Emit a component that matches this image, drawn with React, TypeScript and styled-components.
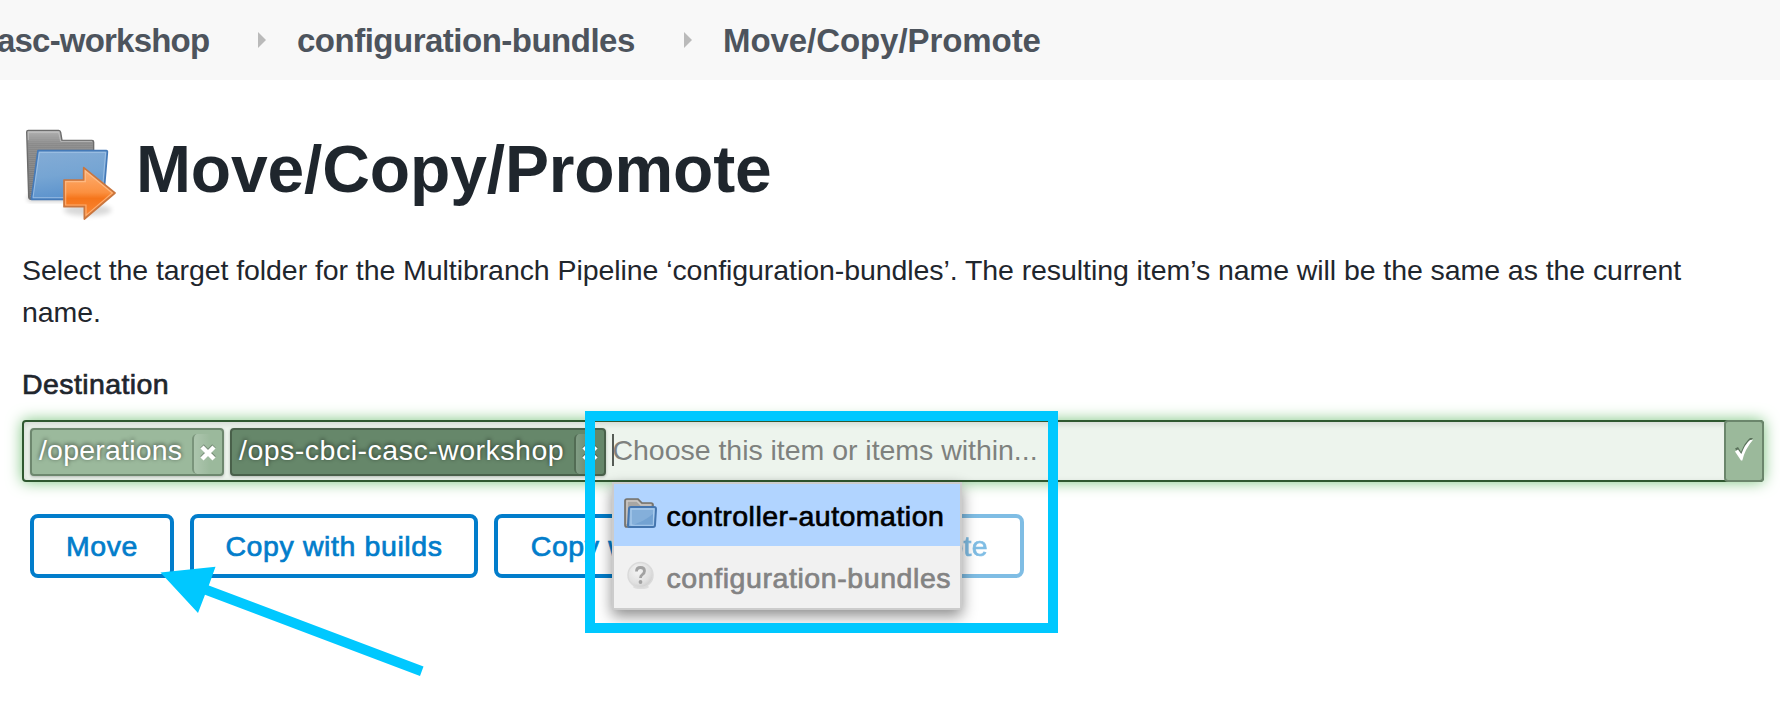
import React from 'react';
import styled, { createGlobalStyle } from 'styled-components';

const GlobalStyle = createGlobalStyle`
  *, *::before, *::after { box-sizing: border-box; }
  body {
    margin: 0;
    background: #fff;
    color: #1f262d;
    font-family: "Liberation Sans", "Helvetica Neue", Arial, sans-serif;
    font-size: 28.5px;
  }
`;

const Page = styled.div`
  position: relative;
  width: 100%;
  height: 702px;
  overflow: hidden;
`;

const Breadcrumbs = styled.nav`
  display: flex;
  height: 80px;
  padding-top: 1px;
  background: #f8f8f8;
  line-height: 80px;
`;

const Crumb = styled.a<{ $tracking: number; $width: number }>`
  flex: none;
  width: ${(p) => p.$width}px;
  white-space: nowrap;
  color: #4d545d;
  font-size: 33px;
  font-weight: 700;
  letter-spacing: ${(p) => p.$tracking}px;
  &:first-child { margin-left: -3px; }
`;

const Chevron = styled.svg`
  flex: none;
  width: 8px;
  height: 16px;
  margin: 31px 31px 0 0;
  fill: #bababa;
`;

const Content = styled.main`
  padding: 40px 16px 0 22px;
`;

const TitleRow = styled.header`
  display: flex;
  gap: 20px;
  height: 110px;
`;

const Title = styled.h1`
  margin: 0;
  font-size: 66px;
  line-height: 98px;
  letter-spacing: -0.15px;
`;

const Description = styled.p`
  max-width: 1720px;
  margin: 19px 0 0;
  line-height: 42px;
  letter-spacing: -0.07px;
`;

const Label = styled.div`
  margin-top: 30px;
  line-height: 42px;
  letter-spacing: 0.4px;
  -webkit-text-stroke: 0.7px currentColor;
`;

const FieldArea = styled.div`
  position: relative;
  margin-top: 15px;
`;

const Field = styled.div`
  display: flex;
  align-items: center;
  gap: 6px;
  height: 62px;
  padding-left: 6px;
  border: 2px solid #2f5830;
  border-radius: 4px;
  background: #edf4ed;
  box-shadow: 0 0 15px #7cc47f, inset 0 2px 6px rgba(0, 0, 0, 0.12);
`;

const Token = styled.div<{ $active?: boolean; $width: number; $tracking: number }>`
  display: flex;
  justify-content: space-between;
  flex: none;
  width: ${(p) => p.$width}px;
  height: 48px;
  margin-top: 2px;
  padding-left: 7px;
  border: 2px solid ${(p) => (p.$active ? '#49604a' : '#6d876e')};
  border-radius: 4px;
  background: ${(p) => (p.$active ? '#66876a' : '#9bb99c')};
  box-shadow: 0 1px 3px rgba(0, 0, 0, 0.25);
  color: #fff;
  line-height: 40px;
  letter-spacing: ${(p) => p.$tracking}px;
  white-space: nowrap;
  text-shadow: 0 -1px 4px rgba(0, 0, 0, 0.65);
`;

const Remove = styled.button<{ $active?: boolean }>`
  display: flex;
  justify-content: center;
  width: 30px;
  height: 40px;
  margin: 4px 0 0;
  padding: 10px 0 0;
  border: 0;
  border-left: 2px solid ${(p) => (p.$active ? '#526c54' : '#7a947b')};
  border-radius: 5px 0 0 5px;
  background: linear-gradient(90deg, rgba(255, 255, 255, 0.18), rgba(255, 255, 255, 0) 60%);
`;

const Placeholder = styled.div`
  flex: 1;
  height: 32px;
  margin-top: -2px;
  border-left: 2px solid #555b55;
  color: #7e817e;
  line-height: 32px;
  letter-spacing: -0.03px;
  white-space: nowrap;
`;

const PlaceholderText = styled.span`
  margin-left: -1.5px;
`;

const Confirm = styled.button`
  display: flex;
  flex: none;
  width: 40px;
  height: 62px;
  margin-right: -2px;
  padding: 16px 0 0 8px;
  border: 2px solid #6b866c;
  border-radius: 4px;
  background: #9bb99b;
`;

const Actions = styled.div`
  display: flex;
  gap: 16px;
  margin: 32px 0 0 8px;
`;

const ActionButton = styled.button<{ $width: number }>`
  width: ${(p) => p.$width}px;
  height: 64px;
  padding: 0;
  border: 4px solid #027dcb;
  border-radius: 8px;
  background: #fff;
  color: #027dcb;
  font-family: inherit;
  font-size: 28.5px;
  line-height: 56px;
  letter-spacing: 0.6px;
  white-space: nowrap;
  -webkit-text-stroke: 0.7px currentColor;
  &:disabled { opacity: 0.5; letter-spacing: 0.3px; }
`;

const Menu = styled.ul`
  position: absolute;
  z-index: 2;
  top: 62px;
  left: 590px;
  width: 350px;
  margin: 0;
  padding: 0;
  border: 2px solid #ccc;
  background: #f1f1f1;
  box-shadow: 0 6px 14px rgba(0, 0, 0, 0.45);
  list-style: none;
`;

const MenuItem = styled.li<{ $selected?: boolean; $tracking: number }>`
  display: flex;
  gap: 8.5px;
  height: 62px;
  padding: 2px 0 0 10px;
  background: ${(p) => (p.$selected ? '#b1d4ff' : '#f1f1f1')};
  color: ${(p) => (p.$selected ? '#000' : '#838383')};
  line-height: 60px;
  letter-spacing: ${(p) => p.$tracking}px;
  white-space: nowrap;
  -webkit-text-stroke: 0.7px currentColor;
  svg { flex: none; margin-top: 10px; }
`;

const Highlight = styled.div`
  position: absolute;
  z-index: 3;
  top: 411px;
  left: 585px;
  width: 473px;
  height: 222px;
  border: 10px solid #00c8ff;
`;

const Pointer = styled.svg`
  position: absolute;
  z-index: 3;
  top: 560px;
  left: 155px;
  fill: #00c8ff;
`;

const Separator = () => (
  <Chevron viewBox="0 0 8 16"><path d="M0 0L8 8L0 16Z" /></Chevron>
);

const MoveFolderIcon = () => (
  <svg width="94" height="110" viewBox="18 0 282 330">
    <defs>
      <linearGradient id="back" x1="0" y1="0" x2="0" y2="1">
        <stop offset="0" stopColor="#b4b4b4" /><stop offset="0.2" stopColor="#8a8a8a" /><stop offset="1" stopColor="#757575" />
      </linearGradient>
      <linearGradient id="front" x1="0" y1="0" x2="0.2" y2="1">
        <stop offset="0" stopColor="#84acd6" /><stop offset="0.55" stopColor="#76a5d3" /><stop offset="1" stopColor="#5c93cd" />
      </linearGradient>
      <linearGradient id="arrow" x1="0" y1="0" x2="0" y2="1">
        <stop offset="0" stopColor="#fdb277" /><stop offset="0.48" stopColor="#fb9040" /><stop offset="0.6" stopColor="#f5751b" /><stop offset="1" stopColor="#fb8a38" />
      </linearGradient>
      <filter id="soft" x="-20%" y="-60%" width="140%" height="220%"><feGaussianBlur stdDeviation="8" /></filter>
      <pattern id="lines" width="10" height="6" patternUnits="userSpaceOnUse"><path d="M0 1H10" stroke="#a5a5a5" strokeWidth="2" opacity="0.5" /></pattern>
    </defs>
    <ellipse cx="215" cy="270" rx="72" ry="18" fill="#000" opacity="0.15" filter="url(#soft)" />
    <rect x="36" y="228" width="120" height="14" fill="#000" opacity="0.28" filter="url(#soft)" />
    <path d="M32 36Q32 31 37 31H128Q133 31 134 37L138 61H228Q233 61 233 66V230L45 238Q38 237 38 230Z" fill="url(#back)" stroke="#6c6c6c" strokeWidth="4" />
    <path d="M36 40H130L138 68H230V100H60L48 232H42Z" fill="url(#lines)" />
    <path d="M37 60V37H128L134 64H228" fill="none" stroke="#c8c8c8" strokeWidth="3" opacity="0.7" />
    <path d="M66 92H271Q275 92 274 97L262 238H46Z" fill="url(#front)" stroke="#457ab8" strokeWidth="5" strokeLinejoin="round" />
    <path d="M70 97H269L257 233H51Z" fill="none" stroke="#a9c9ea" strokeWidth="3" opacity="0.7" />
    <path d="M144 180H203V143L297 219L205 297V260H144Z" fill="url(#arrow)" stroke="#c9763f" strokeWidth="5" strokeLinejoin="round" />
    <path d="M149 185H208V153L289 219L210 286V255H149Z" fill="none" stroke="#ffc899" strokeWidth="3.5" opacity="0.65" />
  </svg>
);

const FolderIcon = () => (
  <svg width="34" height="36" viewBox="0 0 34 36">
    <path d="M1 5Q1 3 3 3H14L18 7H27Q29 7 29 9V16H6V31H3Q1 31 1 29Z" fill="#a8a6a3" stroke="#74716c" strokeWidth="1.7" />
    <path d="M3 28V5H13L17 9H27" fill="none" stroke="#cbc8c5" strokeWidth="1.5" />
    <path d="M7 11H30Q32 11 32 13L31 29Q31 31 29 31H5Q4 31 4 29L5 13Q5 11 7 11Z" fill="#84afda" stroke="#4475af" strokeWidth="2" />
    <path d="M7 13H30L29 29H7Z" fill="none" stroke="#a9cbed" strokeWidth="1.3" />
    <path d="M7 29Q18 27 29 18V29Z" fill="#6899cd" opacity="0.6" />
  </svg>
);

const UnknownIcon = () => (
  <svg width="34" height="36" viewBox="0 0 34 36">
    <defs>
      <radialGradient id="ball" cx="0.4" cy="0.35" r="0.7">
        <stop offset="0" stopColor="#f4f4f4" /><stop offset="0.7" stopColor="#e0e0e0" /><stop offset="1" stopColor="#cbcbcb" />
      </radialGradient>
    </defs>
    <ellipse cx="17" cy="29" rx="8" ry="2" fill="#dedede" />
    <circle cx="16.5" cy="17" r="12.5" fill="url(#ball)" stroke="#dadada" strokeWidth="1.5" />
    <path d="M12.5 13.5Q12.5 9.5 16.5 9.5Q20.5 9.5 20.5 13Q20.5 15.2 18.3 16.6Q16.5 17.8 16.5 20" fill="none" stroke="#a2a2a2" strokeWidth="2.8" />
    <circle cx="16.5" cy="24" r="1.9" fill="#a2a2a2" />
  </svg>
);

const CrossIcon = () => (
  <svg width="18" height="18" viewBox="0 0 18 18">
    <path d="M3 2L15 14M15 2L3 14" stroke="#000" strokeOpacity="0.25" strokeWidth="5" />
    <path d="M3 3L15 15M15 3L3 15" stroke="#fff" strokeWidth="4.4" />
  </svg>
);

const CheckIcon = () => (
  <svg width="20" height="26" viewBox="0 0 20 26">
    <path d="M1 10.5L4 9L7 14Q11 4 16 0H19Q11 9 7.5 20Z" fill="#5a725b" />
    <path d="M1 13.5L4 11.5L7.3 16Q11 6 16 2L19 1.8Q11 11 8.3 22.5H7Z" fill="#fff" />
  </svg>
);

export default function App() {
  return (
    <Page>
      <GlobalStyle />
      <Breadcrumbs>
        <Crumb $tracking={-0.8} $width={261}>asc-workshop</Crumb>
        <Separator />
        <Crumb $tracking={-0.5} $width={387}>configuration-bundles</Crumb>
        <Separator />
        <Crumb $tracking={-0.07} $width={320}>Move/Copy/Promote</Crumb>
      </Breadcrumbs>
      <Content>
        <TitleRow>
          <MoveFolderIcon />
          <Title>Move/Copy/Promote</Title>
        </TitleRow>
        <Description>
          Select the target folder for the Multibranch Pipeline ‘configuration-bundles’. The resulting item’s name will be the same as the current name.
        </Description>
        <Label>Destination</Label>
        <FieldArea>
          <Field>
            <Token $width={194} $tracking={0.2}>
              /operations
              <Remove aria-label="Remove"><CrossIcon /></Remove>
            </Token>
            <Token $width={376} $tracking={0.5} $active>
              /ops-cbci-casc-workshop
              <Remove $active aria-label="Remove"><CrossIcon /></Remove>
            </Token>
            <Placeholder><PlaceholderText>Choose this item or items within...</PlaceholderText></Placeholder>
            <Confirm aria-label="Confirm"><CheckIcon /></Confirm>
          </Field>
          <Menu>
            <MenuItem $selected $tracking={0.48}><FolderIcon />controller-automation</MenuItem>
            <MenuItem $tracking={0.58}><UnknownIcon />configuration-bundles</MenuItem>
          </Menu>
        </FieldArea>
        <Actions>
          <ActionButton $width={144}>Move</ActionButton>
          <ActionButton $width={288}>Copy with builds</ActionButton>
          <ActionButton $width={332}>Copy without builds</ActionButton>
          <ActionButton $width={182} disabled>Promote</ActionButton>
        </Actions>
      </Content>
      <Highlight />
      <Pointer width="280" height="125" viewBox="155 560 280 125">
        <path d="M160.5 572.5L215.5 566.8L208.8 585.5L423.5 666.5L420 676L205 594.8L198 613Z" />
      </Pointer>
    </Page>
  );
}
